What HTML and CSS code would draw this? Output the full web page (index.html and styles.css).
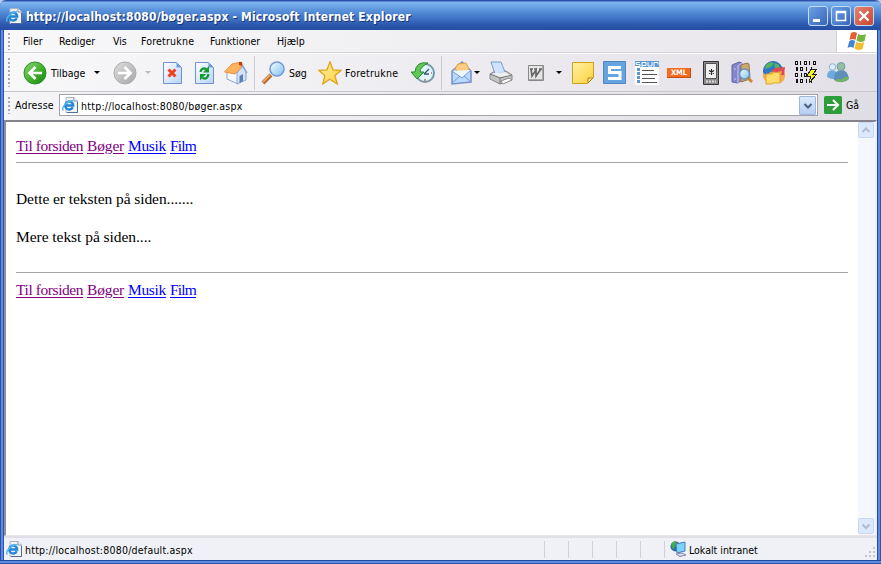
FILE: index.html
```
<!DOCTYPE html>
<html lang="da">
<head>
<meta charset="utf-8">
<title>bøger.aspx</title>
<link rel="stylesheet" href="styles.css">
</head>
<body>
<svg class="defs" width="0" height="0">
<defs>
<linearGradient id="green" x2="1" y2="1"><stop stop-color="#8bd37b"/><stop offset=".5" stop-color="#48b52f"/><stop offset="1" stop-color="#178017"/></linearGradient>
<linearGradient id="grey" x2="1" y2="1"><stop stop-color="#dedede"/><stop offset="1" stop-color="#a6a6a6"/></linearGradient>
<linearGradient id="paper" x2="1" y2="1"><stop stop-color="#fff"/><stop offset="1" stop-color="#b9d3fb"/></linearGradient>
<linearGradient id="gold" x2="1" y2="1"><stop stop-color="#fff3a0"/><stop offset="1" stop-color="#fccf42"/></linearGradient>
<linearGradient id="sky" x2="1" y2="1"><stop stop-color="#f4fcff"/><stop offset="1" stop-color="#7fc4f2"/></linearGradient>
<symbol id="ie" viewBox="0 0 16 16">
<path d="M4 .5h8l3.500 3.500v11.500H4z" fill="#f3f4f2" stroke="#a9b3c6"/><path d="M15.500 5v10.500H5" fill="none" stroke="#536b98"/><path d="M12 .5V4h3.500" fill="#fff" stroke="#8492ad"/>
<path d="M10.800 10.300A4 4 0 1 1 11.200 8.500H4.500" fill="none" stroke="#2387d8" stroke-width="2.400"/>
<path d="M1.500 13.500C-1 11 4 4 11.500 3.500" fill="none" stroke="#55b4f0" stroke-width="1.300"/>
</symbol>
</defs>
</svg>
<div class="window">
<header class="title">
<svg class="titleicon" width="16" height="16"><use href="#ie"/></svg>
<span class="caption">http://localhost:8080/bøger.aspx - Microsoft Internet Explorer</span>
<div class="controls">
<svg class="ctl" width="20" height="20"><path d="M4 12h7v3H4z" fill="#fff"/></svg>
<svg class="ctl" width="20" height="20"><path d="M4.500 4.500h9v9h-9zM4 5.500h10" fill="none" stroke="#fff" stroke-width="1.600"/></svg>
<svg class="ctl close" width="20" height="20"><path d="M4.500 4.500l9 9M13.500 4.500l-9 9" stroke="#fff" stroke-width="2.200"/></svg>
</div>
</header>
<nav class="menu">
<i class="grip"></i>
<span class="m1">Filer</span><span class="m2">Rediger</span><span class="m3">Vis</span><span class="m4">Foretrukne</span><span class="m5">Funktioner</span><span class="m6">Hjælp</span>
<div class="flag"><svg width="20" height="20" viewBox="0 0 20 20"><path d="M4 2Q7 0 10 2L8.500 9Q5.500 7 2.500 9z" fill="#e95b32"/><path d="M11 3Q15 5 19 3L17.500 10Q13 12 9.500 9.500z" fill="#75b53d"/><path d="M2.300 10Q5 8 8.200 10L6.500 17Q3.500 15 .5 17z" fill="#4486d6"/><path d="M9.200 11Q13 13 17.200 11L15.500 18Q11 20 7.500 17.500z" fill="#f4bd2d"/></svg></div>
</nav>
<div class="tools">
<i class="grip"></i>
<div class="tool back"><svg width="24" height="24"><circle cx="12" cy="12" r="11" fill="url(#green)" stroke="#26902a"/><path d="M19 12H7M12.500 6L6.500 12l6 6" fill="none" stroke="#fff" stroke-width="2.700"/></svg><span>Tilbage</span><b class="arrow"></b></div>
<div class="tool forward"><svg width="24" height="24"><circle cx="12" cy="12" r="11" fill="url(#grey)" stroke="#acacac"/><path d="M5 12h12M11.500 6l6 6-6 6" fill="none" stroke="#fff" stroke-width="2.700"/></svg><b class="arrow pale"></b></div>
<div class="tool stop"><svg width="20" height="24"><path d="M.5 1.500h13l5 5v16H.5z" fill="url(#paper)" stroke="#6c91ce"/><path d="M13.500 1.500v5h5z" fill="#6d9de1"/><path d="M5.500 8.500l7 7M12.500 8.500l-7 7" stroke="#ef4020" stroke-width="3"/></svg></div>
<div class="tool refresh"><svg width="20" height="24"><path d="M.5 1.500h13l5 5v16H.5z" fill="url(#paper)" stroke="#6c91ce"/><path d="M13.500 1.500v5h5z" fill="#6d9de1"/><path d="M5.500 11q1-5 6-3M13.500 13q-1 6-6 4" fill="none" stroke="#119b2e" stroke-width="2.400"/><path d="M14 5v6.500H8zM5 19.500V13h6z" fill="#119b2e"/></svg></div>
<div class="tool home"><svg width="24" height="24"><path d="M3 11l7-5 4 7v10L3 18z" fill="#f4f7ff" stroke="#8ba6d2"/><path d="M13 12l6-7 3 6v8l-9 4z" fill="#d4e2f8" stroke="#8ba6d2"/><path d="M.5 11L8 3l9-2 2 3-8 9z" fill="#ffb25c" stroke="#ec9440"/><path d="M18 4l5 8" stroke="#8ba6d2" stroke-width="1.500"/><path d="M15 1h3v4l-3-1z" fill="#c23c20"/><path d="M15.500 15l3.500-2v7l-3.500 2z" fill="#5c7db8"/></svg></div>
<i class="sep s1"></i>
<div class="tool search"><svg width="24" height="24"><path d="M2 22l8-8" stroke="#b86c30" stroke-width="4"/><path d="M2 21l7-7" stroke="#f4b170" stroke-width="1.500"/><circle cx="16" cy="8" r="7" fill="url(#sky)" stroke="#7399d3" stroke-width="1.500"/></svg><span>Søg</span></div>
<div class="tool fav"><svg width="24" height="24"><path d="M12 .8l3 8 8.300.5-6.500 5.400 2.600 8.300-7.700-4.700L4.800 23l2.100-8.300L.8 9.300 9 8.800z" fill="url(#gold)" stroke="#e0a31a" stroke-width="1.300"/></svg><span>Foretrukne</span></div>
<div class="tool history"><svg width="24" height="24"><circle cx="14" cy="12" r="9" fill="#dff4fb" stroke="#7898aa" stroke-width="2"/><path d="M13 13l5-5M13 13h5" stroke="#395675" stroke-width="1.400"/><path d="M14 18v2M20 12h1" stroke="#e95d40" stroke-width="1.500"/><path d="M17 2Q5 0 4 11H0l6 7 7-7H9q0-5 8-9z" fill="#61c854" stroke="#278b34"/></svg></div>
<i class="sep s2"></i>
<div class="tool mail"><svg width="21" height="24"><path d="M1 10L11 1l9 9v11L1 23z" fill="#b8daff" stroke="#7890cc" stroke-width="1.500"/><path d="M4 8l3-5 8-1 3 6-7 7z" fill="#ffcc81" stroke="#e0a14c"/><path d="M1 10l10 7 9-8M1 22l8-7M20 21l-7-6" fill="#e9f7ff" stroke="#769bd4"/></svg><b class="arrow"></b></div>
<div class="tool print"><svg width="24" height="24"><path d="M1 13l5-3h11l6 4v5l-12 4-10-5z" fill="#c4c4c4" stroke="#888"/><path d="M2 1h10l4 10-10 2z" fill="#cfe3ff" stroke="#739bd8"/><path d="M1 13l10 4 12-3M11 17v6" fill="none" stroke="#777"/><path d="M3 13l3-1 10-1 5 3-10 2z" fill="#eee"/><path d="M12 20l8-3 3 2-9 4z" fill="#fff" stroke="#888"/></svg></div>
<div class="tool word"><svg width="16" height="16"><path d="M.5.5h15v15H.5z" fill="#e6e6e6" stroke="#888"/><path d="M14.500 1v14M1 14.500h14" stroke="#aaa"/><path d="M3 4l1 7 4-6v6l5-7M2 4h3M6 4h3M11 4h3" fill="none" stroke="#666" stroke-width="1.700"/></svg><b class="arrow"></b></div>
<div class="tool note"><svg width="22" height="22"><path d="M.5.500h21v15l-6 6H.5z" fill="url(#gold)" stroke="#d29f18"/><path d="M21 16h-5v5z" fill="#fff1a6" stroke="#b77e08"/></svg></div>
<div class="tool sbox"><svg width="24" height="24"><path d="M.5.500h22v22H.5z" fill="#65a4df" stroke="#5187bc"/><path d="M18 6.500H6.500v5H17v6H5" fill="none" stroke="#fff" stroke-width="3"/></svg></div>
<div class="tool spur"><svg width="24" height="24"><path d="M0 0h24v24H0z" fill="#fff"/><path d="M0 0h24v6H0z" fill="#5c98d4"/><path d="M5 1.500H1v2h4v2H0M7 6V1.500h4v3H7M13 1v4h4V1M19 6V1.500h4v2" fill="none" stroke="#fff"/><path d="M2 7h3v3H2zM2 11h3v3H2zM2 15h3v3H2zM2 19h3v3H2z" fill="#5d97d2"/><path d="M7 9.500h12M7 13.500h15M7 17.500h13M7 21.500h15" stroke="#555"/></svg></div>
<div class="tool xml"><em>XML</em></div>
<div class="tool star"><svg width="16" height="24"><path d="M.5.500h15v23H.5z" fill="#8b8b8b" stroke="#333"/><path d="M2.500 2.500h11v15h-11z" fill="#f0f0f0" stroke="#555"/><path d="M8.500 8v6M6 9.500l5 3M11 9.500l-5 3" stroke="#222" stroke-width="1.100"/><path d="M3 20.500h10" stroke="#ddd" stroke-width="2" stroke-dasharray="2 1"/></svg></div>
<div class="tool books"><svg width="22" height="24"><path d="M1 4l7-3 3 1v17l-4 3-6-1z" fill="#8585cb" stroke="#6666a5"/><path d="M7 5v17M7 5l4-3M3 8h2M3 18h2" fill="none" stroke="#c8c8f0"/><path d="M10 4l6-2 2 1 1 15-9 3z" fill="#c9a973" stroke="#95754c"/><path d="M17 17l4 4" stroke="#c98a2c" stroke-width="3"/><circle cx="13.500" cy="13" r="5" fill="url(#sky)" stroke="#6691b8" stroke-width="1.500"/></svg></div>
<div class="tool globe"><svg width="24" height="24"><circle cx="11" cy="10" r="9.500" fill="#2e78cb" stroke="#3467ad"/><path d="M4 4q4-4 8-2L9 6l-6 2zM13 2l4 2 1 4-4 0-2-3z" fill="#50b65d"/><path d="M1 12q-1 6 4 9l2-9q7-5 14-2l2 2q1 7-4 10z" fill="#f7a856"/><path d="M10 9l3-2 10-1-1 8h-3l1-4-10 2z" fill="#dd4a50"/><path d="M4 13l6 0 1-2 7 1v10l-7 0-1 1H4z" fill="#ffdc6c" stroke="#dfa42b"/></svg></div>
<div class="tool binary"><svg width="25" height="24" shape-rendering="crispEdges"><g fill="none" stroke="#111"><path d="M1.500.500h2v3h-2zM10.500.500h2v3h-2zM19.500.500h2v3h-2zM6.500 6.500h2v3h-2zM1.500 12.500h2v3h-2zM10.500 12.500h2v3h-2zM6.500 18.500h2v3h-2z"/><path d="M6.500 0v4M15.500 0v4M12.500 6v4M17.500 6v4M7.500 12v4M15.500 12v4M12.500 18v4M17.500 18v4"/><path d="M2.500 6v4M2.500 18v4" stroke-width="2"/></g><path d="M17 8h6l-4 5h4l-8 9 2-7h-4z" fill="#f3f32a" stroke="#222"/></svg></div>
<div class="tool people"><svg width="24" height="24"><path d="M1 16q0-7 6-7l5 3-1 6q-5 1-10-2z" fill="#6eaae0"/><circle cx="6.500" cy="6" r="3.300" fill="#dcecf5" stroke="#88b6db"/><path d="M8 19q0-10 7-10t8 9q-6 6-15 1z" fill="#5f8fb8"/><circle cx="15" cy="5.500" r="4" fill="#92bfa4" stroke="#6e9da2"/><path d="M9 20q4-4 6-1 4-5 8-2-5 6-14 3z" fill="#75b45b"/></svg></div>
</div>
<div class="address">
<i class="grip"></i><span class="label">Adresse</span>
<div class="field"><svg width="16" height="16"><use href="#ie"/></svg><span>http://localhost:8080/bøger.aspx</span><svg class="drop" width="17" height="19"><path d="M4.500 7l3.500 3.500L11.500 7" fill="none" stroke="#46617e" stroke-width="2"/></svg></div>
<svg class="goicon" width="18" height="18"><rect width="18" height="18" rx="1.500" fill="#2e9d3b"/><path d="M3 9h11M9 4l5 5-5 5" fill="none" stroke="#fff" stroke-width="2"/></svg><span class="go">Gå</span>
</div>
<div class="view">
<main class="page">
<div class="links"><a class="seen l1">Til forsiden</a><a class="seen l2">Bøger</a><a class="l3">Musik</a><a class="l4">Film</a></div>
<hr>
<p class="first">Dette er teksten på siden.......</p>
<p class="second">Mere tekst på siden....</p>
<hr>
<div class="links end"><a class="seen l1">Til forsiden</a><a class="seen l2">Bøger</a><a class="l3">Musik</a><a class="l4">Film</a></div>
</main>
<aside class="scroll"><svg width="17" height="17"><rect x=".5" y=".5" width="15" height="15" rx="1.500"/><path d="M4.500 10L8 6.500l3.500 3.500"/></svg><svg width="17" height="17"><rect x=".5" y=".5" width="15" height="15" rx="1.500"/><path d="M4.500 6.500L8 10l3.500-3.500"/></svg></aside>
</div>
<footer class="status">
<svg width="16" height="16"><use href="#ie"/></svg><span class="target">http://localhost:8080/default.aspx</span>
<i class="cell"></i><i class="cell"></i><i class="cell"></i><i class="cell"></i><i class="cell"></i>
<div class="zone"><svg width="17" height="16"><circle cx="5.500" cy="5.500" r="5" fill="#2c66ad"/><path d="M1 3q3-4 6-2L5 6 3 9z" fill="#43ae45"/><path d="M6 3l9-2v9l-8 2z" fill="#77d4f7" stroke="#5179bb"/><path d="M6 13l6-1 4 2-6 1.500z" fill="#d8dbe8" stroke="#858bab"/></svg><span>Lokalt intranet</span></div>
<svg class="resize" width="12" height="12"><path d="M9 0h2v2H9zM5 4h2v2H5zM9 4h2v2H9zM1 8h2v2H1zM5 8h2v2H5zM9 8h2v2H9z" fill="#c4c4c8"/></svg>
</footer>
</div>
</body>
</html>
```

FILE: styles.css
```
*{box-sizing:border-box}
html,body{margin:0;width:881px;height:564px;overflow:hidden;background:#b8c9ec}
.defs{display:block;height:0}
svg{flex:none;display:block}
.window{width:881px;height:564px;background:linear-gradient(90deg,#2a4fae 0 1px,#5c8ddd 1px 3px,#2c52ab 3px 4px,#eceaee 4px 877px,#2548a4 877px 878px,#5c8ddd 878px 880px,#2c52ab 880px);border-radius:6px 6px 0 0;overflow:hidden;font:10.5px/14px "DejaVu Sans Condensed","DejaVu Sans",sans-serif;font-stretch:condensed;color:#000;white-space:nowrap}
.title{height:30px;display:flex;align-items:center;padding:2px 7px 0 6px;background:linear-gradient(#2c4fae 0 1px,#82b8ef 2px,#72aaea 5px,#5b94dc 10px,#4478c9 17px,#2b57ad 25px,#264da4);color:#fff}
.titleicon{margin-right:4px}
.caption{font:bold 12px/18px "DejaVu Sans Condensed","DejaVu Sans",sans-serif;font-stretch:condensed;letter-spacing:.15px;text-shadow:1px 1px #173777;width:390px;padding-top:1px}
.controls{display:flex;gap:3px;margin-left:auto}
.ctl{background:linear-gradient(135deg,#6ba0e4,#3866b9);border:1px solid #c6dcf5;border-radius:3px;width:20px;height:20px}
.close{background:linear-gradient(135deg,#e68472,#c54730)}
.menu{height:23px;margin:0 4px;display:flex;align-items:center;background:linear-gradient(90deg,#f8f8f9,#e7e5ea);border-bottom:1px solid #d5d3d9}
.grip{width:3px;height:17px;margin:0 9px 0 4px;background:radial-gradient(circle at 1px 1px,#aaa8ae 0 1px,transparent 1.200px) 0 0/3px 4px;flex:none}
.menu span{flex:none}
.menu .grip{margin-right:12px}
.m1{width:36px}.m2{width:54px}.m3{width:28px}.m4{width:69px;letter-spacing:.2px}.m5{width:67px}.m6{width:50px}
.flag{margin-left:auto;width:41px;height:22px;border-left:1px solid #d2d0d6;background:#fff;display:grid;place-items:center}
.tools{height:39px;margin:0 4px;display:flex;align-items:center;background:linear-gradient(90deg,#f8f8f9,#e3e0e7);border-top:1px solid #fff;border-bottom:1px solid #c8c6cc}
.tools .grip{height:29px;margin-right:12px}
.tool{display:flex;align-items:center;flex:none}
.tool span{margin-left:4px}
.arrow{width:0;height:0;border:3px solid transparent;border-top-color:#000;border-bottom:0}
.pale{border-top-color:#bbb}
.back{width:90px}.back span{width:43px}
.forward{width:50px}.forward .arrow{margin-left:8px}
.stop{width:32px}.refresh{width:29px}.home{width:30px}
.sep{width:1px;height:34px;background:#cdcbd1;flex:none}
.s1{margin-right:6px}.search{width:57px}.fav{width:93px}.fav span{margin-left:3px;letter-spacing:.2px}.history{width:30px}
.s2{margin-right:9px}.mail{width:38px}.mail .arrow{margin-left:2px}.print{width:39px}
.word{width:44px}.word .arrow{margin-left:12px}
.note{width:31px}.sbox{width:32px}.spur{width:32px}.xml{width:36px}
.xml em{width:24px;height:10px;background:#f36a20;color:#fff;font:bold 7.5px/10px "DejaVu Sans Condensed","DejaVu Sans",sans-serif;text-align:center;border:0;box-shadow:inset -1px -1px #c44e13}
.star{width:28px}.books{width:31px}.globe{width:32px}.binary{width:32px}
.address{height:28px;margin:0 4px;display:flex;align-items:center;background:linear-gradient(90deg,#f5f5f7,#e0dee5);padding-bottom:2px}
.address .grip{margin-right:4px}
.label{width:44px;letter-spacing:.2px}
.field{width:759px;height:22px;border:1px solid #a3a1aa;background:#fff;display:flex;align-items:center;padding-left:2px}
.field span{margin-left:3px;letter-spacing:.25px;padding-top:1px}
.drop{margin:0 1px 0 auto;background:linear-gradient(#dceafd,#b5cef3);border:1px solid #9db8dc;border-radius:1px}
.goicon{margin:0 4px 0 6px}
.view{height:416px;margin:0 4px;border-left:2px solid #908e96;border-top:2px solid #85838b;border-bottom:1px solid #e7e5ea;border-right:2px solid #eeedf0;background:#fff;display:flex}
.page{width:852px;padding:14px 10px 0;font:15.5px/20px "Liberation Serif",serif}
.links{height:20px;display:flex;gap:4px}
.links a{flex:none;height:20px}
.l1{width:67px;letter-spacing:-.42px}.l2{width:37px;letter-spacing:-.15px}.l3{width:38px;letter-spacing:-.35px}.l4{width:26px;letter-spacing:-.85px}
a{color:#00f;text-decoration:underline;text-underline-offset:2px}.seen{color:#800080}
hr{height:1px;border:0;background:#a4a4a4;margin:6px 0 0}
p{height:20px;margin:0}.first{margin-top:26px;letter-spacing:-.07px}.second{margin-top:18px;letter-spacing:-.05px}.second+hr{margin-top:25px}.end{margin-top:7px}
.scroll{width:17px;background:#f4f7fe;display:flex;flex-direction:column;justify-content:space-between}
.scroll rect{fill:#dce8fc;stroke:#c7d7f5}.scroll path{fill:none;stroke:#aebcd3;stroke-width:2}
.status{height:24px;margin:0 4px;padding-left:2px;background:#eff1f6;border-top:2px solid #e0dfe5;display:flex;align-items:center}
.target{margin-left:3px;width:519px;letter-spacing:.22px;padding-top:1px}
.cell{width:24px;height:17px;border-left:1px solid #d1d0d5}
.zone{display:flex;align-items:center;height:17px;border-left:1px solid #d1d0d5;padding-left:5px;gap:2px}
.zone span{padding-top:1px}
.resize{margin:7px 1px 0 auto}
.window::after{content:"";display:block;height:4px;background:linear-gradient(#2548a4 0 1px,#5c8ddd 1px 3px,#2c52ab 3px)}
```
